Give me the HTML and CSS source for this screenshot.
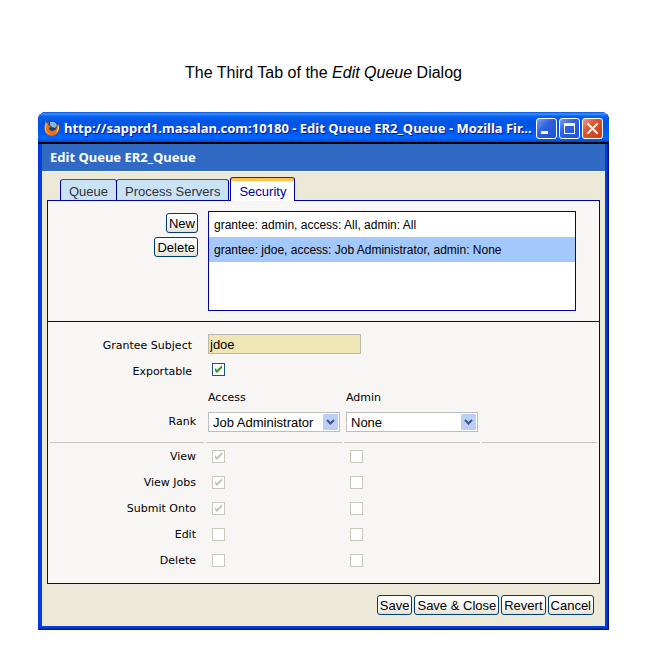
FILE: index.html
```html
<!DOCTYPE html>
<html lang="en">
<head>
    <meta charset="UTF-8">
    <meta name="viewport" content="width=device-width, initial-scale=1.0">
    <title>Edit Queue ER2_Queue</title>
    <link rel="stylesheet" href="styles.css">
</head>
<body>
    <p class="caption">The Third Tab of the <em>Edit Queue</em> Dialog</p>

    <div class="window">
        <div class="titlebar">
            <svg class="logo" width="16" height="16" viewBox="0 0 16 16">
                <circle cx="8" cy="8" r="7" fill="#1c3f7c"/>
                <path d="M6 2c3-1 6 0 7 3l-2 3-3-1-2-2z" fill="#7db8e8"/>
                <path d="M1 1l2 2 2-1-1 3 3 1-2 2c0 3 4 4 6 2 2-1 2-4 1-6 3 2 4 5 2 8-2 4-8 5-11 2C0 11 0 7 1 5z" fill="#e8701a"/>
                <path d="M1 3l2 1-1 4c0 3 2 6 5 6-4 1-7-3-6-7z" fill="#f9b233"/>
                <path d="M14 4c2 3 1 7-2 9 1-2 2-5 2-9z" fill="#ffd24a"/>
            </svg>
            <span class="title">http://sapprd1.masalan.com:10180 - Edit Queue ER2_Queue - Mozilla Fir...</span>
            <button class="control" aria-label="Minimize">
                <svg width="19" height="19" viewBox="0 0 19 19"><path d="M4 12h7v3H4z" fill="#fff"/></svg>
            </button>
            <button class="control" aria-label="Maximize">
                <svg width="19" height="19" viewBox="0 0 19 19"><path d="M4 4h11v11H4zM5 7v7h9V7z" fill="#fff" fill-rule="evenodd"/></svg>
            </button>
            <button class="control close" aria-label="Close">
                <svg width="19" height="19" viewBox="0 0 19 19"><path d="M5 5l9 9M14 5l-9 9" stroke="#fff" stroke-width="2" stroke-linecap="square"/></svg>
            </button>
        </div>

        <div class="content">
            <h1>Edit Queue ER2_Queue</h1>

            <div class="tabs" role="tablist">
                <button class="tab" role="tab">Queue</button>
                <button class="tab" role="tab">Process Servers</button>
                <button class="tab active" role="tab" aria-selected="true">Security</button>
            </div>

            <div class="panel">
                <div class="grants">
                    <div class="grant-buttons">
                        <button class="btn">New</button>
                        <button class="btn">Delete</button>
                    </div>
                    <select class="grant-list" size="4" aria-label="Grants">
                        <option>grantee: admin, access: All, admin: All</option>
                        <option selected>grantee: jdoe, access: Job Administrator, admin: None</option>
                    </select>
                </div>

                <table class="form">
                    <colgroup>
                        <col class="col-label">
                        <col class="col-field">
                        <col class="col-field">
                        <col>
                    </colgroup>
                    <tr class="top">
                        <th><label for="subject">Grantee Subject</label></th>
                        <td colspan="3"><input class="subject" type="text" id="subject" value="jdoe"></td>
                    </tr>
                    <tr class="top">
                        <th><label for="exportable">Exportable</label></th>
                        <td colspan="3"><input type="checkbox" id="exportable" checked></td>
                    </tr>
                    <tr class="heads">
                        <td></td>
                        <td id="access">Access</td>
                        <td id="admin">Admin</td>
                        <td></td>
                    </tr>
                    <tr class="rank">
                        <th>Rank</th>
                        <td>
                            <select class="dropdown" aria-labelledby="access">
                                <option>Job Administrator</option>
                            </select>
                        </td>
                        <td>
                            <select class="dropdown" aria-labelledby="admin">
                                <option>None</option>
                            </select>
                        </td>
                        <td></td>
                    </tr>
                    <tr>
                        <th>View</th>
                        <td><input type="checkbox" aria-label="View access" checked disabled></td>
                        <td><input type="checkbox" aria-label="View admin" disabled></td>
                        <td></td>
                    </tr>
                    <tr>
                        <th>View Jobs</th>
                        <td><input type="checkbox" aria-label="View Jobs access" checked disabled></td>
                        <td><input type="checkbox" aria-label="View Jobs admin" disabled></td>
                        <td></td>
                    </tr>
                    <tr>
                        <th>Submit Onto</th>
                        <td><input type="checkbox" aria-label="Submit Onto access" checked disabled></td>
                        <td><input type="checkbox" aria-label="Submit Onto admin" disabled></td>
                        <td></td>
                    </tr>
                    <tr>
                        <th>Edit</th>
                        <td><input type="checkbox" aria-label="Edit access" disabled></td>
                        <td><input type="checkbox" aria-label="Edit admin" disabled></td>
                        <td></td>
                    </tr>
                    <tr>
                        <th>Delete</th>
                        <td><input type="checkbox" aria-label="Delete access" disabled></td>
                        <td><input type="checkbox" aria-label="Delete admin" disabled></td>
                        <td></td>
                    </tr>
                </table>
            </div>

            <div class="footer">
                <button class="btn">Save</button>
                <button class="btn">Save &amp; Close</button>
                <button class="btn">Revert</button>
                <button class="btn">Cancel</button>
            </div>
        </div>
    </div>
</body>
</html>
```
FILE: styles.css
```css
:root {
    --navy: #00009c;
    --beige: #ece9d8;
    --panel: #f7f6f4;
}

* {
    box-sizing: border-box;
}

body {
    margin: 0;
    padding: 63px 39px 16px 38px;
    background: #ffffff;
    color: #000000;
    font-family: "Liberation Sans", Arial, sans-serif;
    font-size: 13px;
}

button,
input,
select {
    font-family: inherit;
    font-size: 13px;
    margin: 0;
}

.caption {
    margin: 0 0 29px;
    font-size: 16px;
    line-height: 20px;
    text-align: center;
}

/* Window frame */
.window {
    padding: 0 4px 4px;
    border-radius: 8px 8px 0 0;
    background: #0040dd;
    box-shadow: inset 1px 0 #0831d9, inset -1px -1px #00138c, inset -2px -2px #0028b8;
}

.titlebar {
    display: flex;
    align-items: center;
    gap: 2px;
    height: 32px;
    margin: 0 -4px;
    padding: 2px 6px 0;
    border-bottom: 2px solid #000000;
    border-radius: 8px 8px 0 0;
    background: linear-gradient(#0a50d8 0, #3c96ff 2px, #0a62f0 4px, #0054e3 10px, #0058ee 20px, #0066ff 26px, #0048c8 30px);
}

.logo {
    flex: none;
    margin-right: 2px;
}

.title {
    flex: 1;
    min-width: 0;
    overflow: hidden;
    white-space: nowrap;
    font-family: "Noto Sans", sans-serif;
    font-size: 13px;
    font-weight: bold;
    line-height: 20px;
    color: #ffffff;
    text-shadow: 1px 1px #0a1883;
}

.control {
    flex: none;
    display: flex;
    width: 21px;
    height: 21px;
    padding: 0;
    border: 1px solid #ffffff;
    border-radius: 3px;
    background: linear-gradient(135deg, #7aa0f4, #2f62e0 40%, #1f50cc);
}

.close {
    background: linear-gradient(135deg, #f09a80, #e0502c 40%, #c83c14);
}

.content {
    background: var(--beige);
}

h1 {
    margin: 0;
    padding: 0 8px;
    border-bottom: 1px solid #ffffff;
    background: #316ac5;
    color: #ffffff;
    font-family: "Noto Sans", sans-serif;
    font-size: 13px;
    line-height: 27px;
}

/* Tabs */
.tabs {
    display: flex;
    align-items: flex-end;
    margin: 5px 18px -1px;
}

.tab {
    position: relative;
    height: 22px;
    margin-right: -1px;
    padding: 2px 8px 0;
    border: 1px solid var(--navy);
    border-top-color: #31656b;
    border-radius: 3px 3px 0 0;
    background: #c9e3f5;
    color: #31313c;
}

.active {
    height: 24px;
    margin-left: 2px;
    padding: 4px 8px 0;
    border-top-color: #31313c;
    border-bottom: 0;
    background: linear-gradient(#ffc34a 3px, #ffffff 3px);
    color: var(--navy);
}

.panel {
    margin: 0 5px;
    padding-bottom: 8px;
    border: 1px solid var(--navy);
    background: var(--panel);
}

.grants {
    display: grid;
    grid-template-columns: 150px 1fr;
    gap: 10px;
    padding: 10px 23px 10px 0;
    border-bottom: 1px solid var(--navy);
}

.grant-buttons {
    display: flex;
    flex-direction: column;
    align-items: flex-end;
    gap: 4px;
    padding-top: 2px;
}

.btn {
    height: 20px;
    padding: 0 2px;
    border: 1px solid #003c74;
    border-radius: 3px;
    background: linear-gradient(#ffffff, #f4f3ee 70%, #e4e1cf);
    color: #000000;
}

.grant-list {
    width: 100%;
    height: 100px;
    padding: 0;
    border: 1px solid var(--navy);
    border-radius: 0;
    outline: none;
    overflow: hidden;
    background: #ffffff;
    font-size: 12px;
}

.grant-list option {
    min-height: 25px;
    padding: 6px 5px 5px;
}

.grant-list option:checked {
    background: #a3c8fb linear-gradient(#a3c8fb, #a3c8fb);
    color: #000000;
}

/* Grant form */
.form {
    width: 100%;
    margin-top: 8px;
    border-spacing: 2px;
    table-layout: fixed;
    font-family: "DejaVu Sans", Verdana, sans-serif;
    font-size: 11px;
}

.col-label {
    width: 154px;
}

.col-field {
    width: 136px;
}

.form th,
.form td {
    height: 24px;
    padding: 0 2px;
    line-height: 16px;
    text-align: left;
}

.form th {
    padding-right: 8px;
    font-weight: normal;
    text-align: right;
}

.form .top th {
    padding: 4px 12px 0 0;
}

.form .heads td {
    padding-top: 3px;
}

.form .rank th,
.form .rank td {
    height: 33px;
    padding-bottom: 8px;
    border-bottom: 1px solid #c6c6c6;
}

.subject {
    display: block;
    width: 153px;
    height: 20px;
    padding: 0 1px;
    border: 1px solid #b8b8b0;
    background: #efe6b4;
    font-family: "Liberation Sans", Arial, sans-serif;
}

.dropdown {
    display: block;
    width: 132px;
    height: 20px;
    padding: 0 4px;
    border: 1px solid #bdbdbd;
    border-radius: 0;
    appearance: none;
    background: #ffffff url("data:image/svg+xml,%3Csvg xmlns='http://www.w3.org/2000/svg' width='15' height='16'%3E%3Crect width='15' height='16' rx='1' fill='%23bccffa'/%3E%3Cpath d='M4 6l3.500 3.500L11 6' fill='none' stroke='%23425684' stroke-width='2'/%3E%3C/svg%3E") no-repeat right 1px center;
    color: #000000;
    font-family: "Liberation Sans", Arial, sans-serif;
}

input[type="checkbox"] {
    display: block;
    width: 13px;
    height: 13px;
    margin: 0 0 1px 4px;
    border: 1px solid #1c5180;
    appearance: none;
    background: #ffffff;
}

input[type="checkbox"]:checked {
    background: #ffffff url("data:image/svg+xml,%3Csvg xmlns='http://www.w3.org/2000/svg' width='11' height='11'%3E%3Cpath d='M2 4v3l2 2 5-5V1L4 6z' fill='%2321a121'/%3E%3C/svg%3E");
}

input[type="checkbox"]:disabled {
    border-color: #cac8bb;
}

input[type="checkbox"]:checked:disabled {
    background-image: url("data:image/svg+xml,%3Csvg xmlns='http://www.w3.org/2000/svg' width='11' height='11'%3E%3Cpath d='M2 4v3l2 2 5-5V1L4 6z' fill='%23c4c3b6'/%3E%3C/svg%3E");
}

.footer {
    display: flex;
    justify-content: flex-end;
    gap: 2px;
    padding: 11px;
}
```
